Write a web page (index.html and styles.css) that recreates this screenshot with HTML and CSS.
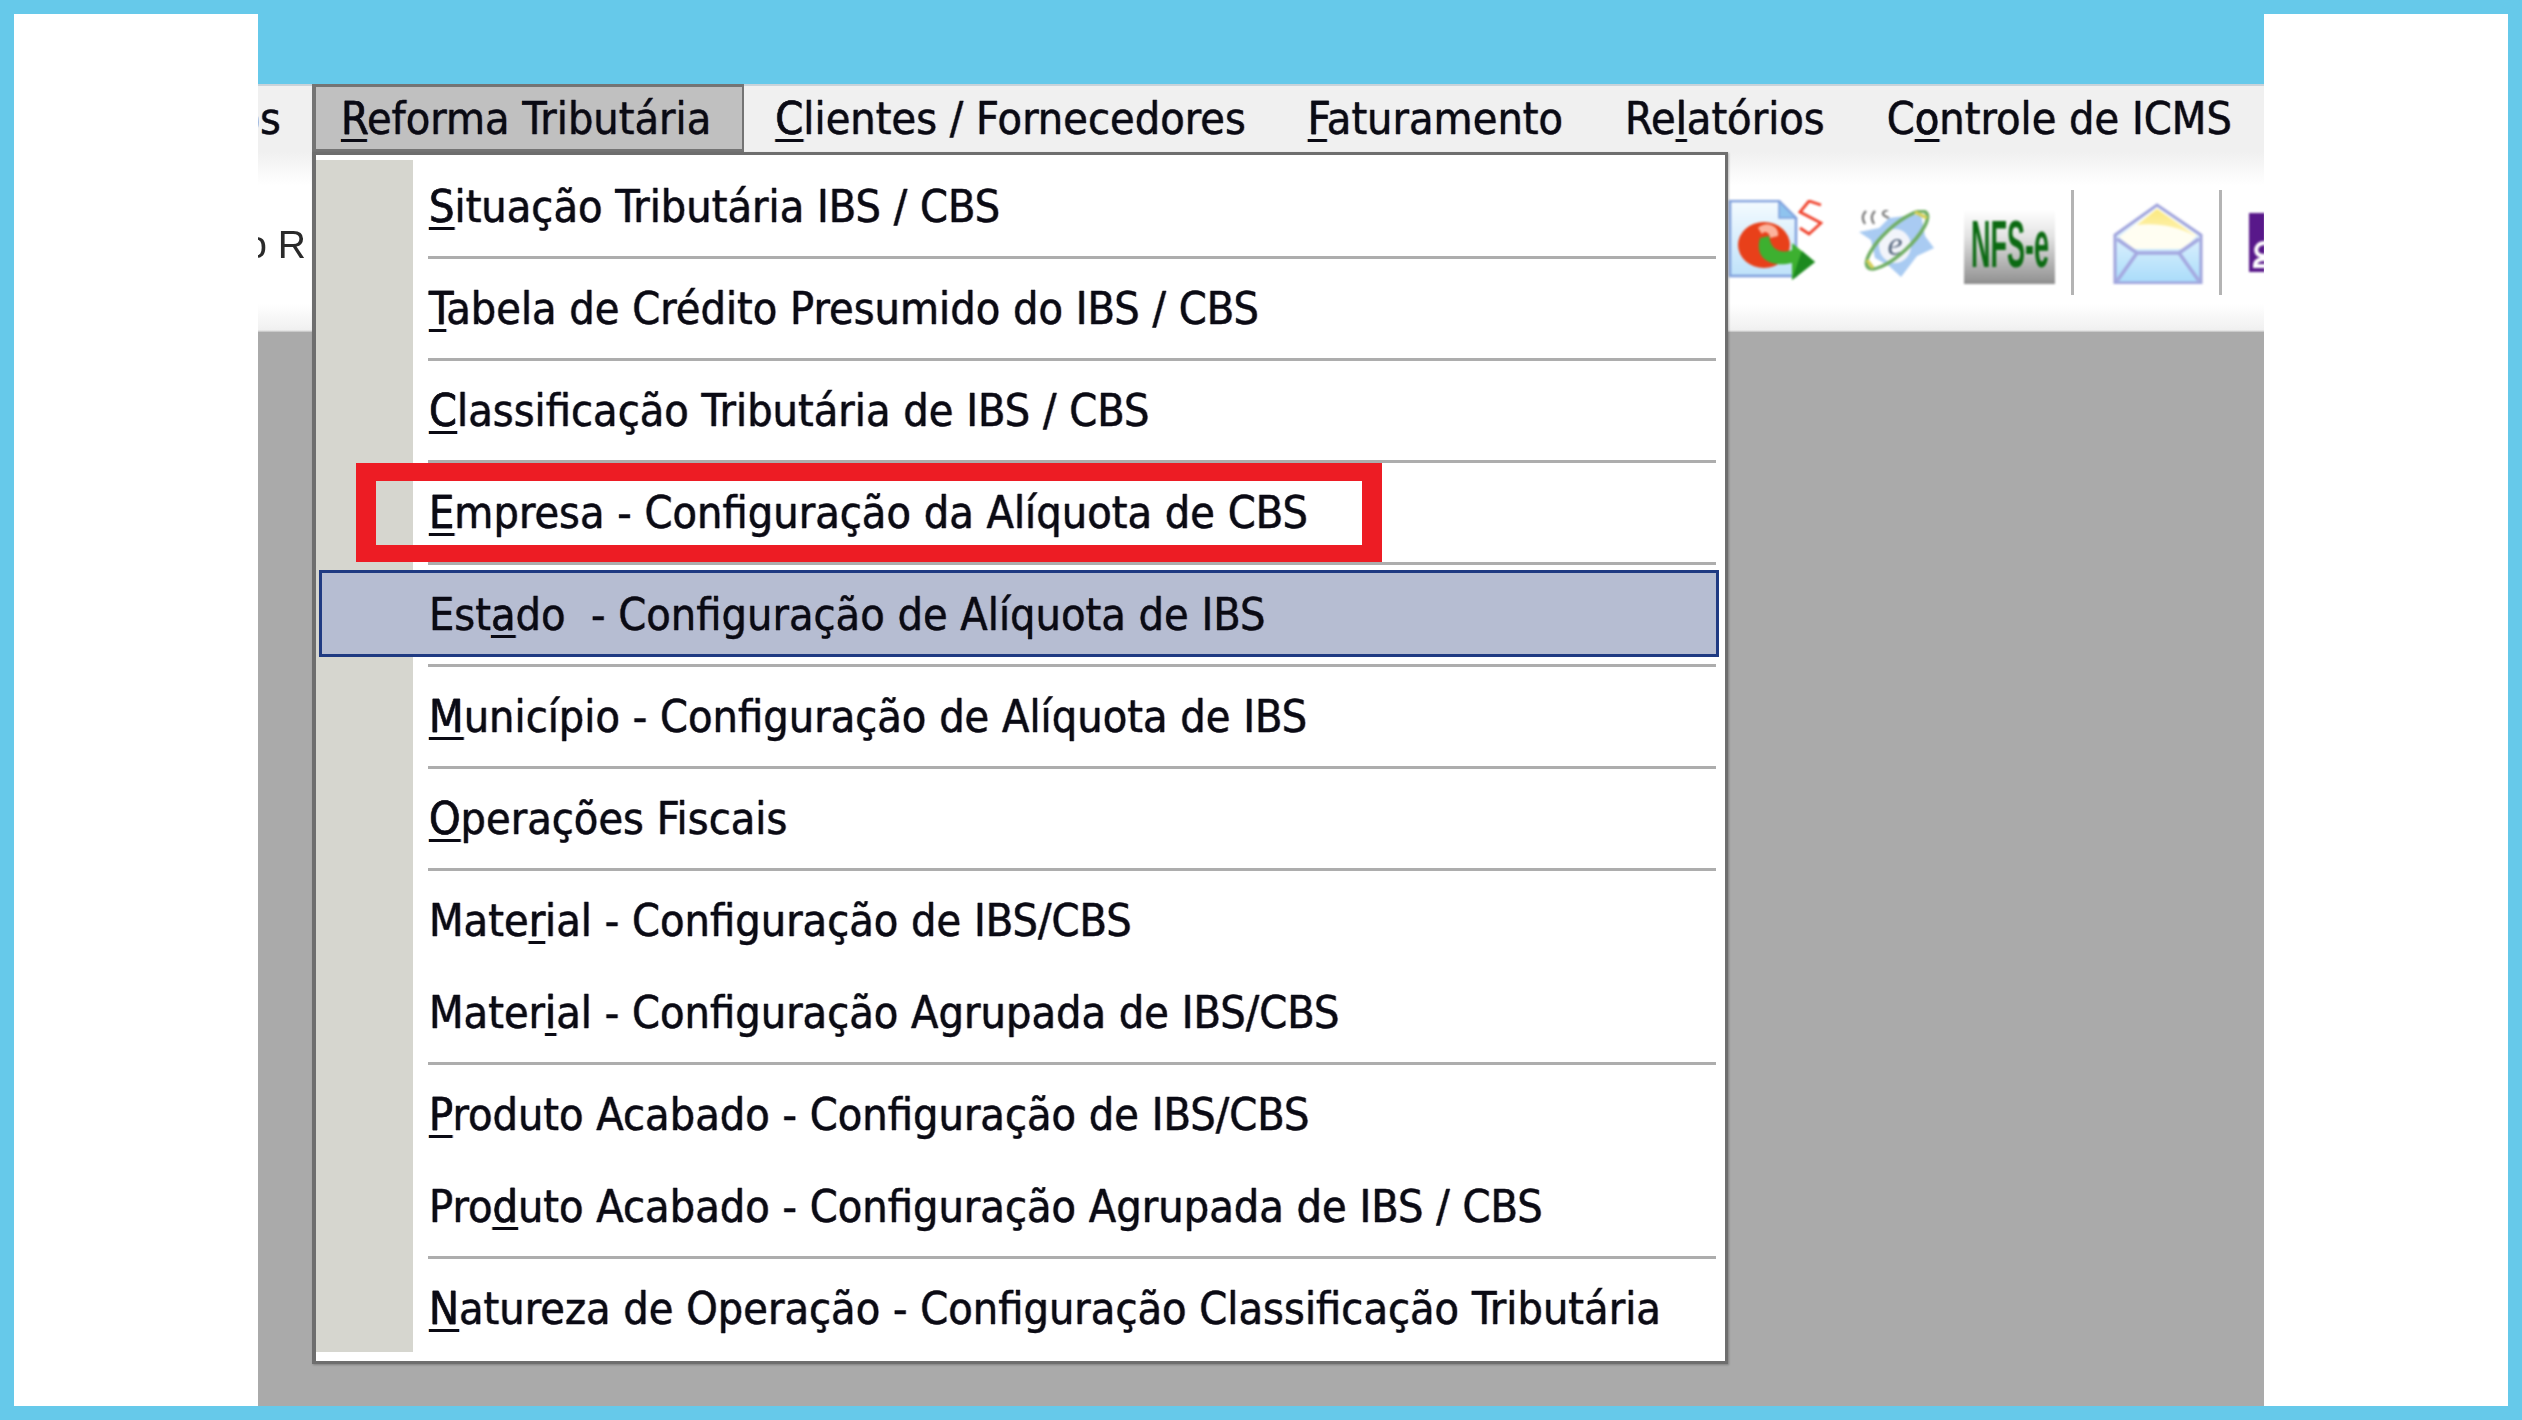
FILE: index.html
```html
<!DOCTYPE html>
<html lang="pt-BR">
<head>
<meta charset="utf-8">
<title>Reforma Tributária</title>
<link rel="stylesheet" href="styles.css">
</head>
<body>
<div class="frame">
  <div class="side"></div>
  <main class="app">
    <div class="top-strip"></div>
    <div class="window">
      <nav class="menubar">
        <div class="menu-cut"><span class="txt">Cadastros</span></div>
        <div class="menu-item active"><span class="txt"><u>R</u>eforma Tributária</span></div>
        <div class="menu-item"><span class="txt"><u>C</u>lientes / Fornecedores</span></div>
        <div class="menu-item"><span class="txt"><u>F</u>aturamento</span></div>
        <div class="menu-item"><span class="txt">Re<u>l</u>atórios</span></div>
        <div class="menu-item"><span class="txt">C<u>o</u>ntrole de ICMS</span></div>
      </nav>
      <div class="toolbar">
        <div class="tool-cut"><span class="tool-label">Cadastro R</span></div>
        <div class="tools">
          <svg class="ico ico-doc" viewBox="0 0 95 82" aria-hidden="true">
            <defs>
              <linearGradient id="dg" x1="0" y1="0" x2="0" y2="1"><stop offset="0" stop-color="#f4fbff"/><stop offset="1" stop-color="#bfe2fa"/></linearGradient>
            </defs>
            <path d="M2 1H51L68 18V76H2Z" fill="url(#dg)" stroke="#7f9fdc" stroke-width="2.5"/>
            <path d="M51 1V18H68Z" fill="#8fc3ee" stroke="#7f9fdc" stroke-width="1.5"/>
            <path d="M93 5 81 1 72 12 93 23 81 34 72 28" fill="none" stroke="#f0402a" stroke-width="2.8"/>
            <ellipse cx="36" cy="45" rx="26" ry="23" fill="#e8401a"/>
            <path d="M30 28C38 20 52 26 50 36L42 38C42 32 36 30 34 34Z" fill="#ffc8b4" opacity=".85"/>
            <path d="M32 38C26 58 42 68 64 63L64 80 87 62 64 43 64 50C52 54 43 50 41 36Z" fill="#3db030"/>
            <path d="M64 80 87 62 74 51 70 62Z" fill="#1c8a1f"/>
          </svg>
          <svg class="ico ico-ie" viewBox="0 0 75 67" aria-hidden="true">
            <path d="M0 22 20 18 30 8 62 4 66 26 75 38 58 46 42 67 30 56 16 48 12 30Z" fill="#a9cbf2"/>
            <ellipse cx="36" cy="36" rx="16" ry="17" fill="#f2f4fa"/>
            <text class="ie-e" x="36" y="45" text-anchor="middle">e</text>
            <ellipse cx="38" cy="30" rx="13" ry="40" transform="rotate(47 38 30)" fill="none" stroke="#6fae62" stroke-width="3.5"/>
            <path d="M56 2 68 8" stroke="#d6cf58" stroke-width="3.5" fill="none"/>
            <path d="M8 50 14 58" stroke="#d6cf58" stroke-width="3.5" fill="none"/>
            <path d="M6 14C2 8 4 4 7 1M15 14C11 8 13 4 16 1M30 8C22 5 22 2 29 0" stroke="#777" stroke-width="2.2" fill="none"/>
          </svg>
          <svg class="nfse" viewBox="0 0 91 74" role="img" aria-label="NFS-e">
            <defs>
              <linearGradient id="ng" x1="0" y1="0" x2="0" y2="1"><stop offset="0" stop-color="#fff"/><stop offset=".35" stop-color="#e4e4e4"/><stop offset=".92" stop-color="#9a9a9a"/><stop offset="1" stop-color="#8d8d8d"/></linearGradient>
            </defs>
            <rect width="91" height="74" fill="url(#ng)"/>
            <text class="nfse-t" x="7" y="57" textLength="78" lengthAdjust="spacingAndGlyphs">NFS-e</text>
          </svg>
          <span class="tool-sep"></span>
          <svg class="ico ico-mail" viewBox="0 0 90 81" aria-hidden="true">
            <defs>
              <linearGradient id="mg" x1="0" y1="0" x2="0" y2="1"><stop offset="0" stop-color="#fff"/><stop offset="1" stop-color="#a9dcfa"/></linearGradient>
              <linearGradient id="fg" x1="0" y1="0" x2="0" y2="1"><stop offset="0" stop-color="#fbe97e"/><stop offset="1" stop-color="#fff3b8"/></linearGradient>
            </defs>
            <path d="M2 32 44 2 88 32V80H2Z" fill="url(#mg)" stroke="#9fa3dc" stroke-width="3"/>
            <path d="M6 34 44 5 84 32 72 46H20Z" fill="#fffef2"/>
            <path d="M24 22 44 6 70 24 84 34C62 22 42 20 24 22Z" fill="url(#fg)"/>
            <path d="M4 36 24 50H66L86 36M24 50 4 78M66 50 86 78" fill="none" stroke="#a4a8e0" stroke-width="3.5"/>
          </svg>
          <span class="tool-sep"></span>
          <svg class="ico ico-purple" viewBox="0 0 16 59" aria-hidden="true">
            <rect width="16" height="59" fill="#58188a"/>
            <path d="M16 30C8 30 6 36 8 40 9 42 12 43 16 43V46C10 46 6 48 6 53H16" fill="none" stroke="#fff" stroke-width="4"/>
          </svg>
        </div>
      </div>
      <div class="desk"></div>

      <section class="dropdown">
        <ul class="menu-list">
          <li class="row"><span class="txt"><u>S</u>ituação Tributária IBS / CBS</span></li>
          <li class="sep"></li>
          <li class="row"><span class="txt"><u>T</u>abela de Crédito Presumido do IBS / CBS</span></li>
          <li class="sep"></li>
          <li class="row"><span class="txt"><u>C</u>lassificação Tributária de IBS / CBS</span></li>
          <li class="sep"></li>
          <li class="row"><span class="txt"><u>E</u>mpresa - Configuração da Alíquota de CBS</span></li>
          <li class="sep"></li>
          <li class="row selected"><span class="txt">Est<u>a</u>do&nbsp; - Configuração de Alíquota de IBS</span></li>
          <li class="sep"></li>
          <li class="row"><span class="txt"><u>M</u>unicípio - Configuração de Alíquota de IBS</span></li>
          <li class="sep"></li>
          <li class="row"><span class="txt"><u>O</u>perações Fiscais</span></li>
          <li class="sep"></li>
          <li class="row"><span class="txt">Mate<u>r</u>ial - Configuração de IBS/CBS</span></li>
          <li class="row"><span class="txt">Mater<u>i</u>al - Configuração Agrupada de IBS/CBS</span></li>
          <li class="sep"></li>
          <li class="row"><span class="txt"><u>P</u>roduto Acabado - Configuração de IBS/CBS</span></li>
          <li class="row"><span class="txt">Pro<u>d</u>uto Acabado - Configuração Agrupada de IBS / CBS</span></li>
          <li class="sep"></li>
          <li class="row"><span class="txt"><u>N</u>atureza de Operação - Configuração Classificação Tributária</span></li>
        </ul>
        <div class="callout"></div>
      </section>
    </div>
  </main>
  <div class="side"></div>
</div>
</body>
</html>
```

FILE: styles.css
```css
* { box-sizing: border-box; }
html, body { margin: 0; height: 100%; }
body { width: 2522px; height: 1420px; overflow: hidden; background: #66c9ea; }

.frame {
  display: flex;
  width: 2522px;
  height: 1420px;
  padding: 14px;
}
.side { width: 244px; flex: none; background: #fff; }
.app { width: 2006px; flex: none; display: flex; flex-direction: column; overflow: hidden; }
.top-strip { height: 70px; flex: none; background: #66c9ea; }
.window { position: relative; flex: 1; display: flex; flex-direction: column; background: #aaa; }

.txt {
  display: inline-block;
  font-family: "DejaVu Sans", sans-serif;
  font-stretch: condensed;
  font-size: 44.6px;
  line-height: 50px;
  color: #0a0a14;
  white-space: nowrap;
  -webkit-text-stroke: .35px #0a0a14;
  text-shadow: -1px 0 rgba(205, 120, 20, .4), 1px 0 rgba(20, 90, 200, .4);
  filter: blur(.6px);
}
.txt u { text-decoration-thickness: 3px; text-underline-offset: 5px; text-decoration-skip-ink: none; }

.menubar {
  height: 68px;
  flex: none;
  display: flex;
  background: #f0f0f0;
  box-shadow: inset 0 2px 0 #c9d3da;
}
.menu-cut { width: 54px; flex: none; display: flex; justify-content: flex-end; overflow: hidden; padding: 2px 31px 0 0; align-items: center; }
.menu-item { display: flex; align-items: center; padding: 2px 31px 0; flex: none; }
.menu-item.active {
  background: #c0c0c0;
  border: 3px solid #747474;
  border-left-width: 4px;
  border-right-width: 2px;
  padding: 2px 31px 0 25px;
}

.toolbar {
  height: 180px;
  flex: none;
  display: flex;
  justify-content: space-between;
  background: linear-gradient(#f0f0f0 0, #fff 33px, #fff 152px, #f0f0f0 178px, #bdbdbd 180px);
}
.tool-cut { display: flex; justify-content: flex-end; width: 48px; overflow: hidden; align-items: center; padding-top: 6px; }
.tool-label { font-family: "Liberation Sans", sans-serif; font-size: 39px; line-height: 50px; color: #2a2a2a; white-space: nowrap; filter: blur(.6px); }
.tools { display: flex; align-items: flex-start; width: 536px; flex: none; overflow: hidden; }
.ico { display: block; flex: none; filter: blur(.8px); }
.ico-doc { width: 95px; height: 82px; margin-top: 48px; }
.ico-ie { width: 75px; height: 67px; margin: 58px 0 0 36px; }
.nfse {
  display: block;
  width: 91px;
  height: 74px;
  margin: 58px 0 0 30px;
  flex: none;
  filter: blur(.8px);
}
.nfse-t {
  font-family: "Liberation Sans", sans-serif;
  font-weight: 700;
  font-size: 66px;
  fill: #0b6a12;
}
.tool-sep { width: 3px; height: 105px; margin: 38px 0 0 16px; flex: none; background: #b4b4b4; filter: blur(.5px); }
.ico-mail { width: 90px; height: 81px; margin: 51px 0 0 39px; }
.tool-sep + .ico-purple { margin-left: 27px; }
.ico-purple { width: 16px; height: 59px; margin-top: 61px; }
.ie-e { font-family: "Liberation Serif", serif; font-style: italic; font-size: 34px; fill: #5a6a80; }

.desk { flex: 1; background: #aaa; }

.dropdown {
  position: absolute;
  left: 54px;
  top: 68px;
  width: 1416px;
  height: 1212px;
  border: 3px solid #6e6e6e;
  border-left-width: 4px;
  background: #fff;
  padding: 5px 0 9px;
  box-shadow: 1px 1px 2px rgba(0, 0, 0, .25);
}
.menu-list {
  list-style: none;
  margin: 0;
  padding: 0;
  height: 100%;
  display: flex;
  flex-direction: column;
  background: linear-gradient(to right, #d6d6cf 97px, #fff 97px);
}
.row {
  height: 92px;
  flex: none;
  display: flex;
  align-items: center;
  padding: 2px 0 0 113px;
}
.row.selected {
  height: 87px;
  margin: 2px 6px 3px 3px;
  padding: 2px 0 0 107px;
  background: #b6bdd2;
  border: 3px solid #1f3a82;
}
.sep {
  height: 3px;
  flex: none;
  margin: 4px 9px 3px 112px;
  background: #adadad;
  filter: blur(.5px);
}
.callout {
  position: absolute;
  left: 40px;
  top: 308px;
  width: 1026px;
  height: 99px;
  border: solid #ed1c24;
  border-width: 18px 20px 17px;
}
```
